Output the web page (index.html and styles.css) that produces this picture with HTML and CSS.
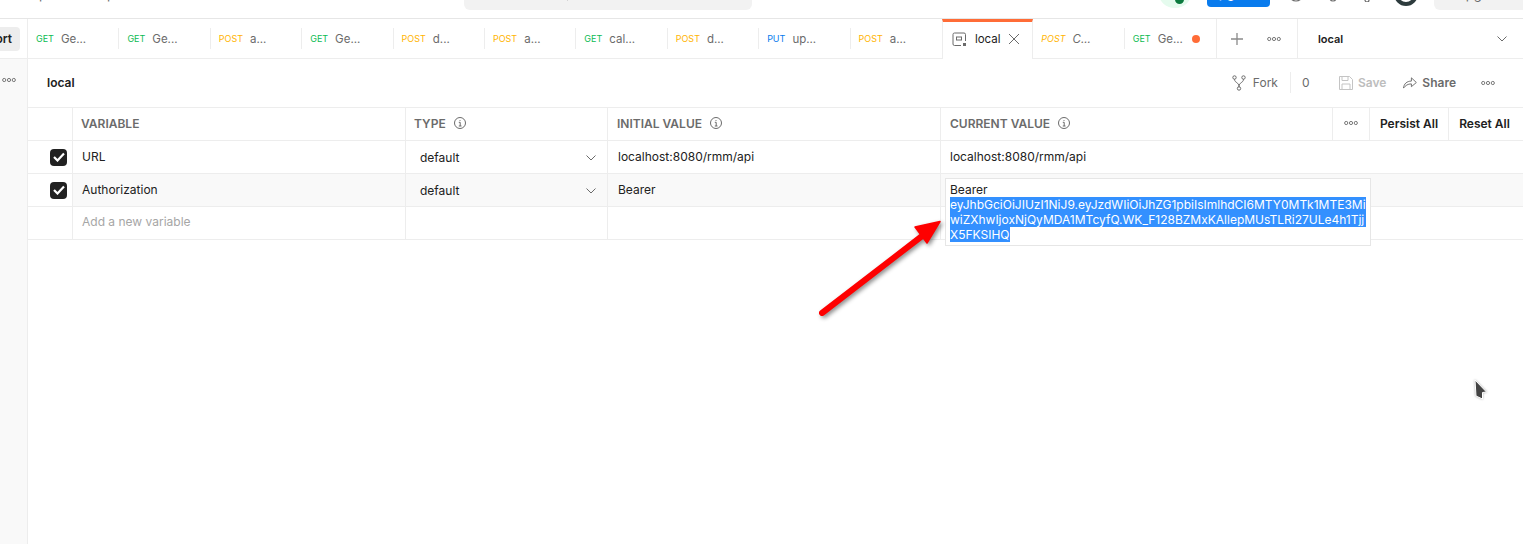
FILE: index.html
```html
<!DOCTYPE html>
<html>
<head>
    <meta charset="UTF-8">
    <title>local</title>
    <link rel="stylesheet" href="styles.css">
</head>
<body>
    <div class="topbar">
        <div class="topbar-row">
            <div class="top-nav"><span>Workspaces</span><span>Reports</span></div>
            <div class="search">
                <svg width="14" height="14" viewBox="0 0 14 14" fill="none" stroke="#6b6b6b" stroke-width="1.2"><circle cx="6" cy="6" r="5"/><path d="M9.5 9.5L13 13"/></svg>
            </div>
            <div class="sync"><i></i></div>
            <div class="invite">Upgrade</div>
            <svg class="top-icon first" width="16" height="16" viewBox="0 0 16 16" fill="none" stroke="#6b6b6b" stroke-width="1.2"><circle cx="8" cy="8" r="7"/></svg>
            <svg class="top-icon" width="16" height="16" viewBox="0 0 16 16" fill="none" stroke="#6b6b6b" stroke-width="1.2"><path d="M5 12a3 3 0 0 0 6 0"/></svg>
            <svg class="top-icon" width="10" height="16" viewBox="0 0 10 16" fill="none" stroke="#6b6b6b" stroke-width="1.2"><circle cx="5" cy="14" r="2"/></svg>
            <div class="avatar"></div>
            <div class="upgrade">Upgrade</div>
        </div>
    </div>

    <div class="app">
        <aside class="sidebar">
            <div class="side-top"><div class="import">Import</div></div>
            <div class="side-more">
                <svg class="dots" width="14" height="6" viewBox="0 0 14 6"><circle cx="2.2" cy="3" r="1.6"/><circle cx="7" cy="3" r="1.6"/><circle cx="11.8" cy="3" r="1.6"/></svg>
            </div>
        </aside>

        <div class="workspace">
            <div class="tabs">
                <div class="tab"><span class="method get">GET</span><span class="tab-name">Ge...</span></div>
                <div class="tab"><span class="method get">GET</span><span class="tab-name">Ge...</span></div>
                <div class="tab"><span class="method post">POST</span><span class="tab-name">a...</span></div>
                <div class="tab"><span class="method get">GET</span><span class="tab-name">Ge...</span></div>
                <div class="tab"><span class="method post">POST</span><span class="tab-name">d...</span></div>
                <div class="tab"><span class="method post">POST</span><span class="tab-name">a...</span></div>
                <div class="tab"><span class="method get">GET</span><span class="tab-name">cal...</span></div>
                <div class="tab"><span class="method post">POST</span><span class="tab-name">d...</span></div>
                <div class="tab"><span class="method put">PUT</span><span class="tab-name">up...</span></div>
                <div class="tab last"><span class="method post">POST</span><span class="tab-name">a...</span></div>
                <div class="tab active">
                    <svg width="15" height="15" viewBox="0 0 15 15" fill="none" stroke="#6b6b6b" stroke-width="1"><path d="M9 13.5H2.5a1.5 1.5 0 0 1-1.5-1.5V2.5A1.5 1.5 0 0 1 2.5 1H12a1.5 1.5 0 0 1 1.5 1.5V9"/><rect x="4.5" y="5" width="5" height="3"/><rect x="11" y="11" width="3" height="3" fill="#6b6b6b" stroke="none"/></svg>
                    <span class="active-name">local</span>
                    <svg class="tab-close" width="12" height="12" viewBox="0 0 12 12" fill="none" stroke="#6b6b6b" stroke-width="1"><path d="M1 1l10 10M11 1L1 11"/></svg>
                </div>
                <div class="tab"><span class="method post draft">POST</span><span class="tab-name draft">C...</span></div>
                <div class="tab last"><span class="method get">GET</span><span class="tab-name">Ge...</span><i class="unsaved"></i></div>
                <div class="tab-actions">
                    <svg width="14" height="14" viewBox="0 0 14 14" fill="none" stroke="#8a8a8a" stroke-width="1.3"><path d="M7 1v12M1 7h12"/></svg>
                    <svg class="dots" width="14" height="6" viewBox="0 0 14 6"><circle cx="2.2" cy="3" r="1.6"/><circle cx="7" cy="3" r="1.6"/><circle cx="11.8" cy="3" r="1.6"/></svg>
                </div>
                <div class="env-select">
                    <span>local</span>
                    <svg width="10" height="6" viewBox="0 0 10 6" fill="none" stroke="#6b6b6b"><path d="M.5.5L5 5 9.5.5"/></svg>
                </div>
            </div>

            <main class="env-page">
                <div class="env-header">
                    <h1>local</h1>
                    <div class="env-actions">
                        <svg width="14" height="16" viewBox="0 0 14 16" fill="none" stroke="#6b6b6b"><circle cx="2.5" cy="2.5" r="1.7"/><circle cx="11.5" cy="2.5" r="1.7"/><circle cx="7" cy="13.5" r="1.7"/><path d="M2.5 4.2C2.5 8 7 7 7 11.8M11.5 4.2C11.5 8 7 7 7 11.8"/></svg>
                        <span class="fork">Fork</span>
                        <span class="fork-count">0</span>
                        <svg class="save-icon" width="14" height="14" viewBox="0 0 14 14" fill="none" stroke="#c4c4c4"><path d="M.5.5h10l3 3v10H.5z"/><path d="M3 .5v4h6v-4M3 13.5V8h8v5.5"/></svg>
                        <span class="save">Save</span>
                        <svg class="share-icon" width="14" height="13" viewBox="0 0 15 13" fill="none" stroke="#6b6b6b"><path d="M.5 12.5C1 8 4 5 9 5V1.5L14.3 6.5 9 11V8C5 8 3 9.5.5 12.5z"/></svg>
                        <span class="share">Share</span>
                        <svg class="dots" width="14" height="6" viewBox="0 0 14 6"><circle cx="2.2" cy="3" r="1.6"/><circle cx="7" cy="3" r="1.6"/><circle cx="11.8" cy="3" r="1.6"/></svg>
                    </div>
                </div>

                <div class="var-table">
                    <div class="cell head"></div>
                    <div class="cell head">VARIABLE</div>
                    <div class="cell head">TYPE <svg class="info" width="12" height="12" viewBox="0 0 12 12" fill="none" stroke="#6b6b6b"><circle cx="6" cy="6" r="5.5"/><path d="M4.8 5.3H6.2V9M4.8 9H7.5M6 3v.9"/></svg></div>
                    <div class="cell head nudge">INITIAL VALUE <svg class="info" width="12" height="12" viewBox="0 0 12 12" fill="none" stroke="#6b6b6b"><circle cx="6" cy="6" r="5.5"/><path d="M4.8 5.3H6.2V9M4.8 9H7.5M6 3v.9"/></svg></div>
                    <div class="cell head nudge">CURRENT VALUE <svg class="info" width="12" height="12" viewBox="0 0 12 12" fill="none" stroke="#6b6b6b"><circle cx="6" cy="6" r="5.5"/><path d="M4.8 5.3H6.2V9M4.8 9H7.5M6 3v.9"/></svg></div>
                    <div class="cell head center"><svg class="dots" width="14" height="6" viewBox="0 0 14 6"><circle cx="2.2" cy="3" r="1.6"/><circle cx="7" cy="3" r="1.6"/><circle cx="11.8" cy="3" r="1.6"/></svg></div>
                    <div class="cell head center action">Persist All</div>
                    <div class="cell head center action no-right">Reset All</div>

                    <div class="cell check-cell"><span class="check"><svg width="12" height="10" viewBox="0 0 12 10" fill="none" stroke="#fff" stroke-width="2.2"><path d="M1 5l3.5 3.500L11 1.500"/></svg></span></div>
                    <div class="cell value">URL</div>
                    <div class="cell type">default<svg width="10" height="6" viewBox="0 0 10 6" fill="none" stroke="#6b6b6b"><path d="M.5.5L5 5 9.5.5"/></svg></div>
                    <div class="cell value init">localhost:8080/rmm/api</div>
                    <div class="cell value current">localhost:8080/rmm/api</div>

                    <div class="cell check-cell"><span class="check"><svg width="12" height="10" viewBox="0 0 12 10" fill="none" stroke="#fff" stroke-width="2.2"><path d="M1 5l3.5 3.500L11 1.500"/></svg></span></div>
                    <div class="cell value shaded">Authorization</div>
                    <div class="cell type shaded">default<svg width="10" height="6" viewBox="0 0 10 6" fill="none" stroke="#6b6b6b"><path d="M.5.5L5 5 9.5.5"/></svg></div>
                    <div class="cell value init shaded">Bearer</div>
                    <div class="cell value current shaded">
                        <div class="value-popup">
                            Bearer
                            <span class="selected">eyJhbGciOiJIUzI1NiJ9.eyJzdWIiOiJhZG1pbiIsImlhdCI6MTY0MTk1MTE3Mi</span>
                            <span class="selected">wiZXhwIjoxNjQyMDA1MTcyfQ.WK_F128BZMxKAllepMUsTLRi27ULe4h1Tjj</span>
                            <span class="selected fit">X5FKSIHQ</span>
                        </div>
                    </div>

                    <div class="cell"></div>
                    <div class="cell value placeholder">Add a new variable</div>
                    <div class="cell"></div>
                    <div class="cell"></div>
                    <div class="cell current"></div>
                </div>
            </main>
        </div>
    </div>

    <svg class="annotation" width="1523" height="544" viewBox="0 0 1523 544">
        <g class="arrow">
            <path d="M822 313L926 233" stroke="#fe0000" stroke-width="6" stroke-linecap="round" fill="none"/>
            <path d="M915 227L940 221.500 927 243z" fill="#fe0000" stroke="#fe0000" stroke-width="1.500" stroke-linejoin="round"/>
        </g>
        <path class="pointer" d="M1475 380L1486.500 392 1482.500 392.500 1482.500 399 1476 396z" fill="#444" stroke="#fff" stroke-width="1"/>
    </svg>
</body>
</html>
```

FILE: styles.css
```css
:root {
    --border: #ededed;
    --text: #212121;
    --text-light: #6b6b6b;
    --get: #0cbb52;
    --post: #ffb400;
    --put: #097bed;
    --orange: #ff6c37;
    --shade: #f9f9f9;
}

* {
    margin: 0;
    padding: 0;
    box-sizing: border-box;
}

html, body {
    height: 100%;
    overflow: hidden;
}

body {
    font-family: 'Inter', 'Liberation Sans', sans-serif;
    font-size: 12px;
    color: var(--text);
    background: white;
    display: flex;
    flex-direction: column;
}

/* top bar, only its bottom edge is on screen */
.topbar {
    height: 19px;
    flex-shrink: 0;
    overflow: hidden;
    border-bottom: 1px solid #e6e6e6;
}

.topbar-row {
    height: 48px;
    margin-top: -30px;
    display: flex;
    align-items: center;
}

.top-nav {
    width: 464px;
    display: flex;
    gap: 15px;
    font-size: 13px;
    color: var(--text-light);
}

.search {
    width: 288px;
    height: 32px;
    background: #f2f2f2;
    border-radius: 6px;
    padding-left: 91px;
    display: flex;
    align-items: center;
}

.sync {
    width: 32px;
    height: 28px;
    margin-left: 407px;
    border-radius: 50%;
    background: #e5fbee;
    display: flex;
    align-items: flex-end;
    justify-content: center;
    padding: 0 0 4px 8px;
}

.sync i {
    width: 9px;
    height: 9px;
    border-radius: 50%;
    background: #0b7a3e;
}

.invite {
    width: 63px;
    height: 26px;
    margin-left: 16px;
    border-radius: 4px;
    background: #097bed;
    color: white;
    font-size: 13px;
    line-height: 24px;
    padding-left: 2px;
}

.top-icon {
    margin-left: 21px;
}

.top-icon.first {
    margin-left: 18px;
}

.avatar {
    width: 24px;
    height: 24px;
    margin-left: 22px;
    border-radius: 50%;
    border: 4px solid #2d3b3d;
}

.upgrade {
    flex: 1;
    height: 32px;
    margin-left: 16px;
    border-radius: 6px 0 0 6px;
    background: #f2f2f2;
    color: var(--text-light);
    font-size: 13px;
    line-height: 32px;
    padding-left: 22px;
}

.app {
    flex: 1;
    display: flex;
    min-height: 0;
}

.sidebar {
    width: 28px;
    flex-shrink: 0;
    border-right: 1px solid var(--border);
    display: flex;
    flex-direction: column;
    overflow: hidden;
}

.side-top {
    height: 40px;
    border-bottom: 1px solid var(--border);
    padding-top: 8px;
    display: flex;
    justify-content: flex-end;
    padding-right: 7px;
}

.import {
    height: 24px;
    flex-shrink: 0;
    background: #ededed;
    border-radius: 4px;
    font-weight: 600;
    font-size: 12px;
    line-height: 24px;
    padding: 0 8px;
    direction: rtl;
}

.side-more {
    flex: 1;
    background: var(--shade);
    padding: 12px 0 0 2px;
}

.dots {
    fill: none;
    stroke: var(--text-light);
    stroke-width: 0.9;
    flex-shrink: 0;
}

.workspace {
    flex: 1;
    min-width: 0;
    display: flex;
    flex-direction: column;
}

.tabs {
    height: 40px;
    flex-shrink: 0;
    display: flex;
    border-bottom: 1px solid var(--border);
    align-items: stretch;
}

.tab {
    width: 91.4px;
    flex-shrink: 0;
    display: flex;
    align-items: center;
    gap: 7px;
    padding-left: 8px;
    position: relative;
}

.tab::after {
    content: '';
    position: absolute;
    right: 0;
    top: 9px;
    height: 21px;
    width: 1px;
    background: var(--border);
}

.tab.last::after {
    display: none;
}

.method {
    font-size: 9px;
}

.get { color: var(--get); }
.post { color: var(--post); }
.put { color: var(--put); }

.tab-name {
    color: var(--text-light);
    font-size: 11.5px;
}

.draft {
    font-style: italic;
}

.tab.active {
    height: 40px;
    background: white;
    border-top: 3px solid var(--orange);
    border-left: 1px solid var(--border);
    border-right: 1px solid var(--border);
    padding-left: 9px;
    padding-bottom: 3px;
    gap: 8px;
}

.tab.active::after {
    display: none;
}

.active-name {
    color: var(--text);
    font-size: 11.5px;
}

.tab-close {
    margin-left: -1px;
}

.unsaved {
    width: 8px;
    height: 8px;
    border-radius: 50%;
    background: var(--orange);
    margin-left: 2px;
}

.tab-actions {
    width: 81.8px;
    flex-shrink: 0;
    border-left: 1px solid var(--border);
    border-right: 1px solid var(--border);
    display: flex;
    align-items: center;
    gap: 23px;
    padding-left: 13px;
}

.env-select {
    flex: 1;
    display: flex;
    align-items: center;
    justify-content: space-between;
    padding: 0 16px 0 20px;
    font-weight: 600;
    font-size: 11px;
}

.env-page {
    flex: 1;
    min-height: 0;
}

.env-header {
    height: 49px;
    display: flex;
    align-items: center;
    justify-content: space-between;
    padding: 0 28px 1px 19px;
    border-bottom: 1px solid var(--border);
}

h1 {
    font-size: 12px;
    font-weight: 600;
}

.env-actions {
    display: flex;
    align-items: center;
    color: var(--text-light);
}

.fork {
    margin-left: 7px;
    padding-right: 12px;
}

.fork-count {
    border-left: 1px solid var(--border);
    height: 21px;
    line-height: 21px;
    padding-left: 11px;
    width: 49px;
}

.save-icon {
    margin-right: 5px;
}

.save {
    color: #bdbdbd;
    font-weight: 600;
    margin-right: 17px;
}

.share-icon {
    margin-right: 5px;
}

.share {
    font-weight: 600;
    margin-right: 25px;
}

.var-table {
    display: grid;
    grid-template-columns: 45px 333px 202px 333px 392px 37px 79px 74px;
    grid-auto-rows: 33px;
}

.cell {
    border-right: 1px solid var(--border);
    border-bottom: 1px solid var(--border);
    display: flex;
    align-items: center;
    min-width: 0;
}

.head {
    font-weight: 600;
    color: var(--text-light);
    padding-left: 8px;
    padding-bottom: 2px;
    gap: 8px;
}

.nudge {
    padding-left: 9px;
}

.center {
    justify-content: center;
    padding-left: 0;
}

.action {
    color: var(--text);
}

.no-right {
    border-right: none;
    padding-right: 3px;
}

.check-cell {
    justify-content: flex-end;
    padding-right: 5px;
}

.check {
    width: 17px;
    height: 17px;
    border-radius: 4px;
    background: var(--text);
    display: flex;
    align-items: center;
    justify-content: center;
}

.value {
    padding-left: 9px;
    padding-bottom: 1px;
}

.type {
    padding: 1px 11px 0 14px;
    justify-content: space-between;
}

.init {
    padding-left: 10px;
}

.current {
    grid-column: 5 / 9;
    border-right: none;
    position: relative;
}

.shaded {
    background: var(--shade);
}

.placeholder {
    color: #a6a6a6;
    padding-bottom: 3px;
}

.value-popup {
    position: absolute;
    left: 4px;
    top: 4px;
    width: 426px;
    height: 68px;
    background: white;
    border: 1px solid #e6e6e6;
    padding: 3px 4px;
    line-height: 15px;
    z-index: 2;
}

.selected {
    display: block;
    background: #3390ff;
    color: white;
    white-space: nowrap;
}

.selected.fit {
    width: fit-content;
}

.annotation {
    position: absolute;
    left: 0;
    top: 0;
    z-index: 5;
    pointer-events: none;
}

.arrow {
    filter: drop-shadow(2px 2px 2px rgba(0, 0, 0, 0.45));
}

.pointer {
    filter: drop-shadow(0 0 1px rgba(0, 0, 0, 0.3));
}
```
